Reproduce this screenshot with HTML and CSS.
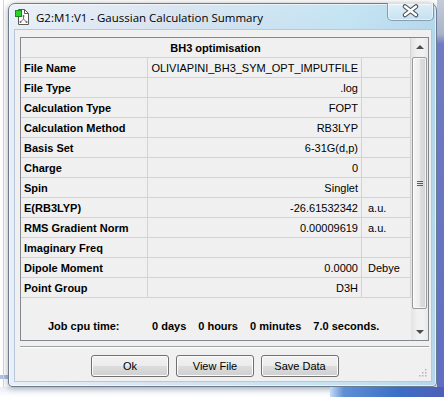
FILE: index.html
```html
<!DOCTYPE html>
<html lang="en">
<head>
  <meta charset="UTF-8" />
  <title>G2:M1:V1 - Gaussian Calculation Summary</title>
  <link rel="stylesheet" href="styles.css">
</head>
<body>

  <div class="desk">
    <div class="desk-left"></div>

    <div class="window">
      <div class="titlebar">
        <svg class="app-icon" width="14" height="16" viewBox="0 0 14 16">
          <path d="M3.5 0.5 H9.5 L13.5 4.5 V15.5 H3.5 Z" fill="#fff" stroke="#5a5a5a" />
          <path d="M9.5 0.5 V4.5 H13.5" fill="none" stroke="#5a5a5a" />
          <path d="M8.5 10 V7 M8.5 10 L5.5 13 M8.5 10 L11.5 13" stroke="#777" fill="none" />
          <circle cx="8.5" cy="7" r="1" fill="#666" />
          <circle cx="5.5" cy="13" r="1" fill="#666" />
          <circle cx="11.5" cy="13" r="1" fill="#666" />
          <rect x="0.5" y="1.5" width="6" height="6" fill="#2bd12b" stroke="#168a16" />
        </svg>
        <span class="title">G2:M1:V1 - Gaussian Calculation Summary</span>
        <div class="close-btn">
          <svg width="47" height="18" viewBox="0 0 47 18">
            <path d="M18 4.5 L29 13 M29 4.5 L18 13" stroke="#4a4f57" stroke-width="4.6" stroke-linecap="round" fill="none" />
            <path d="M18 4.5 L29 13 M29 4.5 L18 13" stroke="#fff" stroke-width="2.4" stroke-linecap="round" fill="none" />
          </svg>
        </div>
      </div>

      <div class="client">
        <div class="panel">
          <div class="content">
            <div class="grid">
              <div class="cell head">BH3 optimisation</div>

              <div class="cell label">File Name</div>
              <div class="cell val">OLIVIAPINI_BH3_SYM_OPT_IMPUTFILE</div>
              <div class="cell unit"></div>

              <div class="cell label">File Type</div>
              <div class="cell val">.log</div>
              <div class="cell unit"></div>

              <div class="cell label">Calculation Type</div>
              <div class="cell val">FOPT</div>
              <div class="cell unit"></div>

              <div class="cell label">Calculation Method</div>
              <div class="cell val">RB3LYP</div>
              <div class="cell unit"></div>

              <div class="cell label">Basis Set</div>
              <div class="cell val">6-31G(d,p)</div>
              <div class="cell unit"></div>

              <div class="cell label">Charge</div>
              <div class="cell val">0</div>
              <div class="cell unit"></div>

              <div class="cell label">Spin</div>
              <div class="cell val">Singlet</div>
              <div class="cell unit"></div>

              <div class="cell label">E(RB3LYP)</div>
              <div class="cell val">-26.61532342</div>
              <div class="cell unit">a.u.</div>

              <div class="cell label">RMS Gradient Norm</div>
              <div class="cell val">0.00009619</div>
              <div class="cell unit">a.u.</div>

              <div class="cell label">Imaginary Freq</div>
              <div class="cell val"></div>
              <div class="cell unit"></div>

              <div class="cell label">Dipole Moment</div>
              <div class="cell val">0.0000</div>
              <div class="cell unit">Debye</div>

              <div class="cell label">Point Group</div>
              <div class="cell val">D3H</div>
              <div class="cell unit"></div>
            </div>

            <div class="cpu">
              <span class="cpu-label">Job cpu time:</span>
              <span>0 days</span>
              <span>0 hours</span>
              <span>0 minutes</span>
              <span>7.0 seconds.</span>
            </div>
          </div>

          <div class="scrollbar">
            <div class="arrow"><span class="tri-up"></span></div>
            <div class="thumb"><span class="grip-lines"></span></div>
            <div class="track"></div>
            <div class="arrow"><span class="tri-down"></span></div>
          </div>
        </div>

        <div class="separator"></div>

        <div class="buttons">
          <button>Ok</button>
          <button>View File</button>
          <button>Save Data</button>
        </div>

        <svg class="size-grip" width="9" height="9" viewBox="0 0 9 9">
          <rect x="7" y="1" width="1.5" height="1.5" fill="#b5b5b5" />
          <rect x="4" y="4" width="1.5" height="1.5" fill="#b5b5b5" />
          <rect x="7" y="4" width="1.5" height="1.5" fill="#b5b5b5" />
          <rect x="1" y="7" width="1.5" height="1.5" fill="#b5b5b5" />
          <rect x="4" y="7" width="1.5" height="1.5" fill="#b5b5b5" />
          <rect x="7" y="7" width="1.5" height="1.5" fill="#b5b5b5" />
        </svg>
      </div>
    </div>

    <div class="desk-right"></div>
  </div>

  <div class="desk-bottom">
    <div class="taskbar"></div>
  </div>

</body>
</html>
```

FILE: styles.css
```css
body {
  margin: 0;
  width: 444px;
  height: 397px;
  overflow: hidden;
  background: #fff;
  font-family: "Liberation Sans", Arial, sans-serif;
  font-size: 11px;
  color: #000;
}

.desk {
  display: flex;
  height: 387px;
}

.desk-left {
  width: 8px;
  background:
    linear-gradient(90deg, transparent 3px, #d6d6d6 3px, #d6d6d6 4px, transparent 4px),
    linear-gradient(180deg, #fff 0, #fff 375px, #b4bde2 375px, #b4bde2 379px, #fff 379px);
}

.desk-right {
  width: 7px;
  background: linear-gradient(180deg, #c4ccd9 0, #aab4c9 34px, #6f7cc4 44px, #5f6fc2 100%);
}

.window {
  width: 429px;
  height: 384px;
  margin-top: 3px;
  box-sizing: border-box;
  border: 1px solid #6a7b92;
  border-radius: 7px 7px 4px 4px;
  background:
    linear-gradient(90deg, rgba(255,255,255,0.45), rgba(255,255,255,0) 40%, rgba(180,228,245,0.55) 80%, rgba(150,205,232,0.5)),
    linear-gradient(180deg, #dbe6f2, #d3e0ee 30px, #d6e2ef);
  box-shadow: 0 1px 6px rgba(0,0,0,0.35), inset 0 0 0 1px rgba(255,255,255,0.6);
  display: flex;
  flex-direction: column;
}

/* title bar */
.titlebar {
  height: 26px;
  display: flex;
  align-items: center;
  padding-left: 6px;
}

.app-icon {
  margin-right: 7px;
  margin-top: -1px;
}

.title {
  font-family: "Open Sans", "Liberation Sans", sans-serif;
  font-size: 11.5px;
  color: #000;
}

.close-btn {
  margin-left: auto;
  margin-right: 2px;
  align-self: flex-start;
  margin-top: -1px;
  width: 47px;
  height: 18px;
  box-sizing: border-box;
  border: 1px solid rgba(80,100,130,0.6);
  border-top: none;
  border-radius: 0 0 5px 5px;
  background: linear-gradient(180deg, rgba(255,255,255,0.55), rgba(220,235,248,0.35));
  box-shadow: inset 0 0 0 1px rgba(255,255,255,0.5);
}

.close-btn svg {
  display: block;
  margin: -1px 0 0 -1px;
}

/* client area */
.client {
  position: relative;
  height: 351px;
  margin: 0 5px 5px 6px;
  background: #f0f0f0;
  box-shadow: 0 0 0 1px #b9c7d8;
  display: flex;
  flex-direction: column;
}

.panel {
  margin: 7px 0 0 5px;
  width: 409px;
  height: 304px;
  box-sizing: border-box;
  border: 1px solid #828790;
  display: flex;
}

.content {
  width: 390px;
}

.grid {
  display: grid;
  grid-template-columns: 127px 214px 49px;
  grid-auto-rows: 20px;
}

.cell {
  box-sizing: border-box;
  border-right: 1px solid #d3d3d3;
  border-bottom: 1px solid #d3d3d3;
  display: flex;
  align-items: center;
  padding: 0 3px;
  white-space: nowrap;
  overflow: hidden;
}

.head {
  grid-column: 1 / -1;
  justify-content: center;
  font-weight: bold;
}

.label {
  font-weight: bold;
}

.val {
  justify-content: flex-end;
}

.unit {
  padding-left: 6px;
}

.cpu {
  display: flex;
  gap: 12px;
  padding: 22px 0 0 27px;
  line-height: 13px;
  font-weight: bold;
  white-space: nowrap;
}

.cpu-label {
  width: 92px;
}

/* scrollbar */
.scrollbar {
  width: 17px;
  display: flex;
  flex-direction: column;
  background: linear-gradient(90deg, #e4e4e4, #f1f1f1 40%, #f1f1f1 70%, #e8e8e8);
}

.arrow {
  height: 17px;
  display: flex;
  align-items: center;
  justify-content: center;
}

.tri-up {
  border-left: 4px solid transparent;
  border-right: 4px solid transparent;
  border-bottom: 4px solid #4d4d4d;
}

.tri-down {
  border-left: 4px solid transparent;
  border-right: 4px solid transparent;
  border-top: 4px solid #4d4d4d;
}

.thumb {
  margin: 2px 1px 0 1px;
  height: 252px;
  box-sizing: border-box;
  border: 1px solid #9a9a9a;
  border-radius: 2px;
  background: linear-gradient(90deg, #f6f6f6, #ececec 50%, #dedede 55%, #d4d4d4);
  box-shadow: inset 0 0 0 1px rgba(255,255,255,0.7);
  display: flex;
  align-items: center;
  justify-content: center;
}

.grip-lines {
  width: 6px;
  height: 5px;
  background: repeating-linear-gradient(180deg, #5c5c5c 0, #5c5c5c 1px, transparent 1px, transparent 2px);
}

.track {
  flex: 1;
}

/* bottom */
.separator {
  margin: 5px 0 0 5px;
  width: 409px;
  border-top: 1px solid #a0a0a0;
  border-bottom: 1px solid #fff;
}

.buttons {
  display: flex;
  gap: 7px;
  padding-left: 76px;
  margin-top: 7px;
}

button {
  width: 78px;
  height: 22px;
  border: 1px solid #707070;
  border-radius: 3px;
  background: linear-gradient(180deg, #f2f2f2 0, #ebebeb 50%, #dddddd 50%, #cfcfcf 100%);
  box-shadow: inset 0 0 0 1px #fcfcfc;
  font-family: "Liberation Sans", Arial, sans-serif;
  font-size: 11px;
  color: #000;
  padding: 0;
}

.size-grip {
  position: absolute;
  right: 4px;
  bottom: 4px;
}

.desk-bottom {
  height: 10px;
  display: flex;
  justify-content: flex-end;
  background: linear-gradient(180deg, #e8eef7, #fff);
}

.taskbar {
  width: 114px;
  background: linear-gradient(90deg, #c6dbf2, #5e8fd6 12%, #3b6fc6 60%, #4f5fb8);
}
```
